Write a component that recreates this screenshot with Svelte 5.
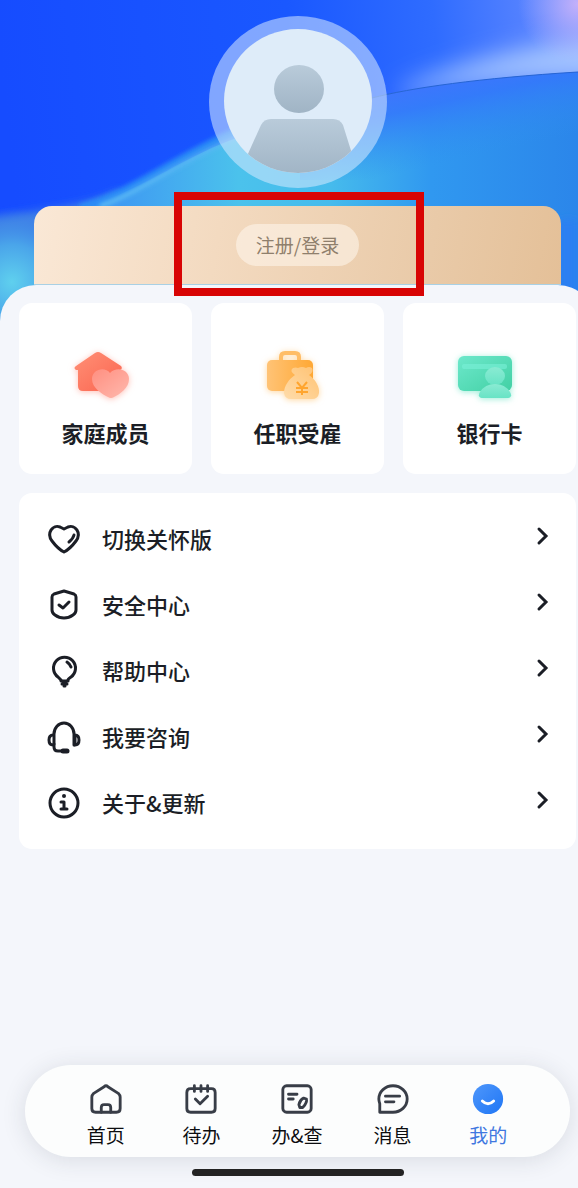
<script>
  let activeTab = $state('mine');

  const cards = [
    { id: 'family', label: '家庭成员' },
    { id: 'job', label: '任职受雇' },
    { id: 'bank', label: '银行卡' }
  ];

  const menu = [
    { id: 'care', label: '切换关怀版' },
    { id: 'safe', label: '安全中心' },
    { id: 'help', label: '帮助中心' },
    { id: 'ask', label: '我要咨询' },
    { id: 'about', label: '关于&更新' }
  ];

  const tabs = [
    { id: 'home', label: '首页' },
    { id: 'todo', label: '待办' },
    { id: 'query', label: '办&查' },
    { id: 'message', label: '消息' },
    { id: 'mine', label: '我的' }
  ];
</script>

<div class="app">
  <!-- wave background behind the profile area -->
  <svg class="waves" viewBox="0 0 578 330" preserveAspectRatio="none" aria-hidden="true">
    <defs>
      <linearGradient id="sky" gradientUnits="userSpaceOnUse" x1="0" y1="60" x2="578" y2="0">
        <stop offset="0" stop-color="#164cff" />
        <stop offset="0.5" stop-color="#1a58ff" />
        <stop offset="0.75" stop-color="#2f6cff" />
        <stop offset="1" stop-color="#6a8eff" />
      </linearGradient>
      <radialGradient id="pink" gradientUnits="userSpaceOnUse" cx="578" cy="4" r="60">
        <stop offset="0" stop-color="#c4b0fa" />
        <stop offset="1" stop-color="#b4b0fc" stop-opacity="0" />
      </radialGradient>
      <linearGradient id="sea" gradientUnits="userSpaceOnUse" x1="120" y1="0" x2="578" y2="0">
        <stop offset="0" stop-color="#3f9bf2" />
        <stop offset="0.26" stop-color="#4bc2ec" />
        <stop offset="0.46" stop-color="#46bbec" />
        <stop offset="0.68" stop-color="#3098f0" />
        <stop offset="1" stop-color="#2b86ea" />
      </linearGradient>
      <linearGradient id="seaTop" gradientUnits="userSpaceOnUse" x1="440" y1="70" x2="460" y2="160">
        <stop offset="0" stop-color="#4272ff" />
        <stop offset="0.35" stop-color="#3478fb" stop-opacity="0.9" />
        <stop offset="1" stop-color="#3090f0" stop-opacity="0" />
      </linearGradient>
      <radialGradient id="corner" gradientUnits="userSpaceOnUse" cx="12" cy="282" r="75">
        <stop offset="0" stop-color="#5fd0ee" />
        <stop offset="0.5" stop-color="#4aa5ea" />
        <stop offset="1" stop-color="#3a80e8" stop-opacity="0" />
      </radialGradient>
      <filter id="soft4" x="-20%" y="-20%" width="140%" height="140%"><feGaussianBlur stdDeviation="4" /></filter>
      <filter id="soft12" x="-20%" y="-80%" width="140%" height="260%"><feGaussianBlur stdDeviation="12" /></filter>
      <filter id="soft2" x="-20%" y="-20%" width="140%" height="140%"><feGaussianBlur stdDeviation="2" /></filter>
    </defs>
    <rect width="578" height="330" fill="url(#sky)" />
    <path d="M400 90 C450 66 520 48 610 34 V76 C520 78 450 84 400 96 Z" fill="#a5c6ff" filter="url(#soft12)" />
    <rect x="500" width="78" height="70" fill="url(#pink)" />
    <path d="M-20 220 C50 208 90 206 120 190 L120 340 H-20 Z" fill="#3f80e6" filter="url(#soft4)" />
    <path d="M60 214 C130 198 170 165 221 144 C260 128 320 112 372 98 C410 88 480 78 578 72 V330 H60 Z" fill="url(#sea)" />
    <path d="M300 118 C330 108 350 104 372 98 C410 88 480 78 578 72 V180 H300 Z" fill="url(#seaTop)" />
    <path d="M80 208 C140 190 170 160 240 130" fill="none" stroke="#2b8cf6" stroke-width="8" filter="url(#soft2)" />
    <path d="M100 206 C145 190 180 160 240 136" fill="none" stroke="#5fbdf4" stroke-width="4" filter="url(#soft2)" />
    <path d="M372 98 C410 88 480 78 578 72" fill="none" stroke="#2764d4" stroke-width="1" />
    <rect y="200" width="100" height="130" fill="url(#corner)" />
    <rect x="558" y="220" width="20" height="110" fill="#2b7ff2" filter="url(#soft4)" />
  </svg>

  <header class="profile">
    <div class="avatar">
      <svg viewBox="0 0 178 173" role="img" aria-label="头像">
        <defs>
          <linearGradient id="head" x1="0" y1="0" x2="0" y2="1">
            <stop offset="0" stop-color="#b9cbda" />
            <stop offset="1" stop-color="#a0b4c5" />
          </linearGradient>
          <clipPath id="face"><ellipse cx="89" cy="85" rx="74" ry="72" /></clipPath>
        </defs>
        <ellipse cx="89" cy="86" rx="89" ry="86" fill="#d7e9ff" fill-opacity="0.55" />
        <g clip-path="url(#face)">
          <rect x="10" y="12" width="158" height="148" fill="#deecf9" />
          <ellipse cx="90" cy="73" rx="25" ry="24" fill="url(#head)" />
          <path d="M62 103 H124 Q131 103 134 109 L150 160 H29 L52 109 Q55 103 62 103 Z" fill="url(#head)" />
        </g>
      </svg>
    </div>
    <div class="banner">
      <button class="login" type="button">注册/登录</button>
      <span class="highlight"></span>
    </div>
  </header>

  <main class="sheet">
    <section class="cards">
      {#each cards as card}
        <button class="card" type="button">
          {#if card.id === 'family'}
            <svg class="art red" viewBox="0 0 72 60" aria-hidden="true">
              <defs>
                <linearGradient id="house" x1="0" y1="0" x2="1" y2="1">
                  <stop offset="0" stop-color="#ff9076" />
                  <stop offset="1" stop-color="#fb6550" />
                </linearGradient>
                <linearGradient id="love" x1="0" y1="0" x2="1" y2="1">
                  <stop offset="0" stop-color="#ff8f80" />
                  <stop offset="1" stop-color="#ffb9ae" />
                </linearGradient>
              </defs>
              <path d="M29 7 Q32 5 35 7 L55 20 Q57 23 54 24 H52 V40 Q52 45 47 45 H17 Q12 45 12 40 V24 H10 Q7 22 10 20 Z" fill="url(#house)" />
              <path d="M42 51 C36 48 26 42 26 33 C26 23 39 20 44 27 C50 20 63 23 63 33 C63 42 54 48 48 51 Q45 53 42 51 Z" fill="url(#love)" />
            </svg>
          {:else if card.id === 'job'}
            <svg class="art orange" viewBox="0 0 72 60" aria-hidden="true">
              <defs>
                <linearGradient id="case" x1="0" y1="0" x2="1" y2="0">
                  <stop offset="0" stop-color="#ffc376" />
                  <stop offset="1" stop-color="#ffa834" />
                </linearGradient>
                <linearGradient id="bag" x1="1" y1="0" x2="0" y2="1">
                  <stop offset="0" stop-color="#ffc272" />
                  <stop offset="1" stop-color="#ffdcaa" />
                </linearGradient>
              </defs>
              <path d="M23 15 V11 Q23 7 27 7 H37 Q41 7 41 11 V15" fill="none" stroke="#ffbd66" stroke-width="4" />
              <rect x="9" y="14" width="46" height="31" rx="5" fill="url(#case)" />
              <path d="M37 29 Q31 25 35 22 Q38 21 40 22 Q44 20 48 22 Q51 20 54 22 Q56 26 51 29 C57 33 62 41 61 47 Q60 53 54 53 H33 Q27 53 26 47 C26 40 31 33 37 29 Z" fill="url(#bag)" />
              <path d="M39 36 L44 42 L49 36 M44 42 V49 M38 42 H50 M38 46 H50" fill="none" stroke="#ffa52f" stroke-width="2" />
            </svg>
          {:else}
            <svg class="art green" viewBox="0 0 72 60" aria-hidden="true">
              <defs>
                <linearGradient id="credit" x1="0" y1="0" x2="1" y2="1">
                  <stop offset="0" stop-color="#6de8cb" />
                  <stop offset="1" stop-color="#42d0a4" />
                </linearGradient>
                <linearGradient id="person" x1="0" y1="0" x2="0" y2="1">
                  <stop offset="0" stop-color="#8aebd3" />
                  <stop offset="1" stop-color="#68e3c5" />
                </linearGradient>
              </defs>
              <rect x="8" y="10" width="54" height="35" rx="6" fill="url(#credit)" />
              <rect x="12" y="18" width="45" height="5" rx="2" fill="#79f0d7" fill-opacity="0.6" />
              <ellipse cx="45" cy="30" rx="10" ry="9" fill="url(#person)" />
              <path d="M32 52 Q27 51 30 46 Q35 38 45 38 Q55 38 60 46 Q63 51 58 52 Z" fill="url(#person)" />
            </svg>
          {/if}
          <span>{card.label}</span>
        </button>
      {/each}
    </section>

    <ul class="menu">
      {#each menu as item}
        <li>
          <button class="row" type="button">
            <svg class="icon" viewBox="0 0 34 34" aria-hidden="true">
              {#if item.id === 'care'}
                <path d="M17 30 C13 28 8 23 5 19 C-1 11 6 2 13 5 Q15 6 17 7 Q19 6 21 5 C28 2 35 11 29 19 C26 23 21 28 17 30 Z" />
                <path d="M27 13 Q26 17 22 20" />
              {:else if item.id === 'safe'}
                <path d="M17 3 L27 6 Q29 7 29 9 V22 Q29 25 26 27 Q22 30 17 30 Q12 30 8 27 Q5 25 5 22 V9 Q5 7 7 6 Z" />
                <path d="M12 17 L16 20 L22 14" />
              {:else if item.id === 'help'}
                <path d="M14 26 Q13 25 11 23 A11 11 0 1 1 24 23 Q21 25 21 26" />
                <path d="M20 8 Q23 10 24 13" />
                <path d="M14 27 H21 M15 30 H20 M17 32 H18" />
              {:else if item.id === 'ask'}
                <path d="M7 24 V14 A10 11 0 0 1 27 14 V25" />
                <path d="M6 15 Q2 15 2 20 Q2 25 6 25 M7 24 V27 Q7 31 11 31 H16" />
                <path d="M28 15 Q32 15 32 20 Q32 25 28 25 Z" />
                <path d="M16 31 H20" stroke-width="5" />
              {:else}
                <circle cx="17" cy="17" r="14" />
                <circle class="solid" cx="17" cy="10" r="2" />
                <path d="M14 16 H17 V23 M14 23 H20" />
              {/if}
            </svg>
            <span>{item.label}</span>
            <svg class="arrow" viewBox="0 0 14 20" aria-hidden="true">
              <path d="M3 3 L10 10 L3 17" />
            </svg>
          </button>
        </li>
      {/each}
    </ul>
  </main>

  <footer class="bottom">
    <nav class="tabbar">
      {#each tabs as tab}
        <button
          type="button"
          class="tab"
          class:active={activeTab === tab.id}
          onclick={() => (activeTab = tab.id)}
        >
          <svg viewBox="-1 -1 36 36" aria-hidden="true">
            {#if tab.id === 'home'}
              <path d="M15 4 Q17 2 19 4 L30 11 Q32 13 32 15 V27 Q32 31 28 31 H6 Q2 31 2 27 V15 Q2 13 4 11 Z" />
              <path d="M12 31 V26 Q12 23 15 23 H19 Q22 23 22 26 V31" />
            {:else if tab.id === 'todo'}
              <path d="M6 6 Q2 6 2 10 V27 Q2 31 6 31 H28 Q32 31 32 27 V10 Q32 6 28 6 Z" />
              <path d="M10 3 V9 M17 3 V9 M24 3 V9" />
              <path d="M11 17 L16 22 L24 14" />
            {:else if tab.id === 'query'}
              <rect x="2" y="3" width="30" height="28" rx="4" />
              <path d="M8 12 H17 M8 17 H13" />
              <path d="M24 16 L27 17 Q28 21 23 26 L20 26 L19 23 Q20 18 24 16 Z" />
            {:else if tab.id === 'message'}
              <path d="M3 31 V22 Q2 19 2 17 A15 14 0 1 1 17 31 Z" />
              <path d="M9 14 H24 M9 20 H18" />
            {:else}
              <defs>
                <linearGradient id="smile" x1="0" y1="0" x2="1" y2="1">
                  <stop offset="0" stop-color="#4f97fb" />
                  <stop offset="1" stop-color="#1f76f5" />
                </linearGradient>
              </defs>
              <circle cx="17" cy="17" r="16" fill="url(#smile)" stroke="none" />
              <path class="mouth" d="M11 19 Q17 25 23 19" />
            {/if}
          </svg>
          <span>{tab.label}</span>
        </button>
      {/each}
    </nav>
    <div class="home-bar"></div>
  </footer>
</div>

<style>
  :global(body) {
    margin: 0;
  }

  .app {
    position: relative;
    display: flex;
    flex-direction: column;
    min-height: 100vh;
    overflow: hidden;
    background: #f4f6fb;
    color: #1b1e26;
    font-family: "Noto Sans CJK SC", sans-serif;
  }

  button {
    border: none;
    background: none;
    padding: 0;
    margin: 0;
    color: inherit;
    font-family: inherit;
    cursor: pointer;
  }

  .waves {
    position: absolute;
    top: 0;
    left: 0;
    width: 100%;
    height: 330px;
  }

  .profile {
    position: relative;
    z-index: 2;
    padding: 16px 17px 0 34px;
  }

  .avatar {
    display: flex;
    justify-content: center;
  }

  .avatar svg {
    width: 178px;
    height: 173px;
  }

  .banner {
    position: relative;
    display: flex;
    align-items: center;
    justify-content: center;
    height: 78px;
    margin-top: 17px;
    border-radius: 18px 18px 0 0;
    background: linear-gradient(100deg, #fae8d6 0%, #f3dac0 35%, #e9caa8 75%, #e4c098 100%);
    border-bottom: 1px solid #a9d0e4;
  }

  .login {
    padding: 0 20px 2px;
    height: 42px;
    border-radius: 21px;
    background: rgba(255, 248, 238, 0.55);
    color: #8f7f6c;
    font-size: 19px;
  }

  /* callout frame round the login button */
  .highlight {
    position: absolute;
    top: -14px;
    left: calc(50% - 124px);
    width: 250px;
    height: 104px;
    box-sizing: border-box;
    border: 8px solid #d80404;
    pointer-events: none;
  }

  .sheet {
    position: relative;
    z-index: 1;
    margin-right: -16px;
    padding: 18px 18px 24px 19px;
    border-radius: 36px 36px 0 0;
    background: #f4f6fb;
  }

  .cards {
    display: grid;
    grid-template-columns: repeat(3, 1fr);
    gap: 19px;
  }

  .card {
    display: flex;
    flex-direction: column;
    align-items: center;
    gap: 10px;
    padding: 43px 0 26px;
    border-radius: 13px;
    background: #fff;
    font-size: 22px;
    font-weight: 600;
    line-height: 32px;
  }

  .art {
    width: 72px;
    height: 60px;
    margin-right: 8px;
  }

  .red {
    filter: drop-shadow(0 1px 3px rgba(255, 130, 110, 0.5));
  }

  .orange {
    filter: drop-shadow(0 1px 3px rgba(255, 190, 100, 0.6));
  }

  .green {
    filter: drop-shadow(0 1px 3px rgba(90, 225, 190, 0.6));
  }

  .menu {
    list-style: none;
    margin: 19px 0 0;
    padding: 13px 0;
    border-radius: 13px;
    background: #fff;
  }

  .row {
    display: flex;
    align-items: center;
    width: 100%;
    height: 66px;
    padding: 0 26px 0 28px;
    font-size: 22px;
    font-weight: 500;
    text-align: left;
  }

  .row span {
    flex: 1;
    margin-left: 21px;
    padding-bottom: 2px;
  }

  .icon,
  .arrow {
    fill: none;
    stroke: #1b1e26;
    stroke-width: 3;
    stroke-linecap: round;
    stroke-linejoin: round;
  }

  .icon {
    width: 34px;
    height: 34px;
    overflow: visible;
  }

  .solid {
    fill: #1b1e26;
    stroke: none;
  }

  .arrow {
    width: 14px;
    height: 20px;
    margin-bottom: 6px;
    stroke-linejoin: miter;
  }

  .bottom {
    position: relative;
    z-index: 1;
    margin-top: auto;
    padding: 0 8px 12px 25px;
  }

  .tabbar {
    display: flex;
    padding: 17px 34px 7px 33px;
    border-radius: 47px;
    background: #fcfdfd;
    box-shadow: 0 3px 24px rgba(40, 45, 60, 0.13);
  }

  .tab {
    flex: 1;
    display: flex;
    flex-direction: column;
    align-items: center;
    gap: 4px;
    color: #0c0d10;
    font-size: 19px;
    line-height: 30px;
  }

  .tab svg {
    width: 34px;
    height: 34px;
    fill: none;
    stroke: #383d47;
    stroke-width: 3;
    stroke-linecap: round;
    stroke-linejoin: round;
  }

  .tab .mouth {
    stroke: #fff;
  }

  .tab.active {
    color: #3f77e0;
  }

  .home-bar {
    width: 212px;
    height: 7px;
    margin: 12px auto 0;
    border-radius: 4px;
    background: #232323;
  }
</style>
